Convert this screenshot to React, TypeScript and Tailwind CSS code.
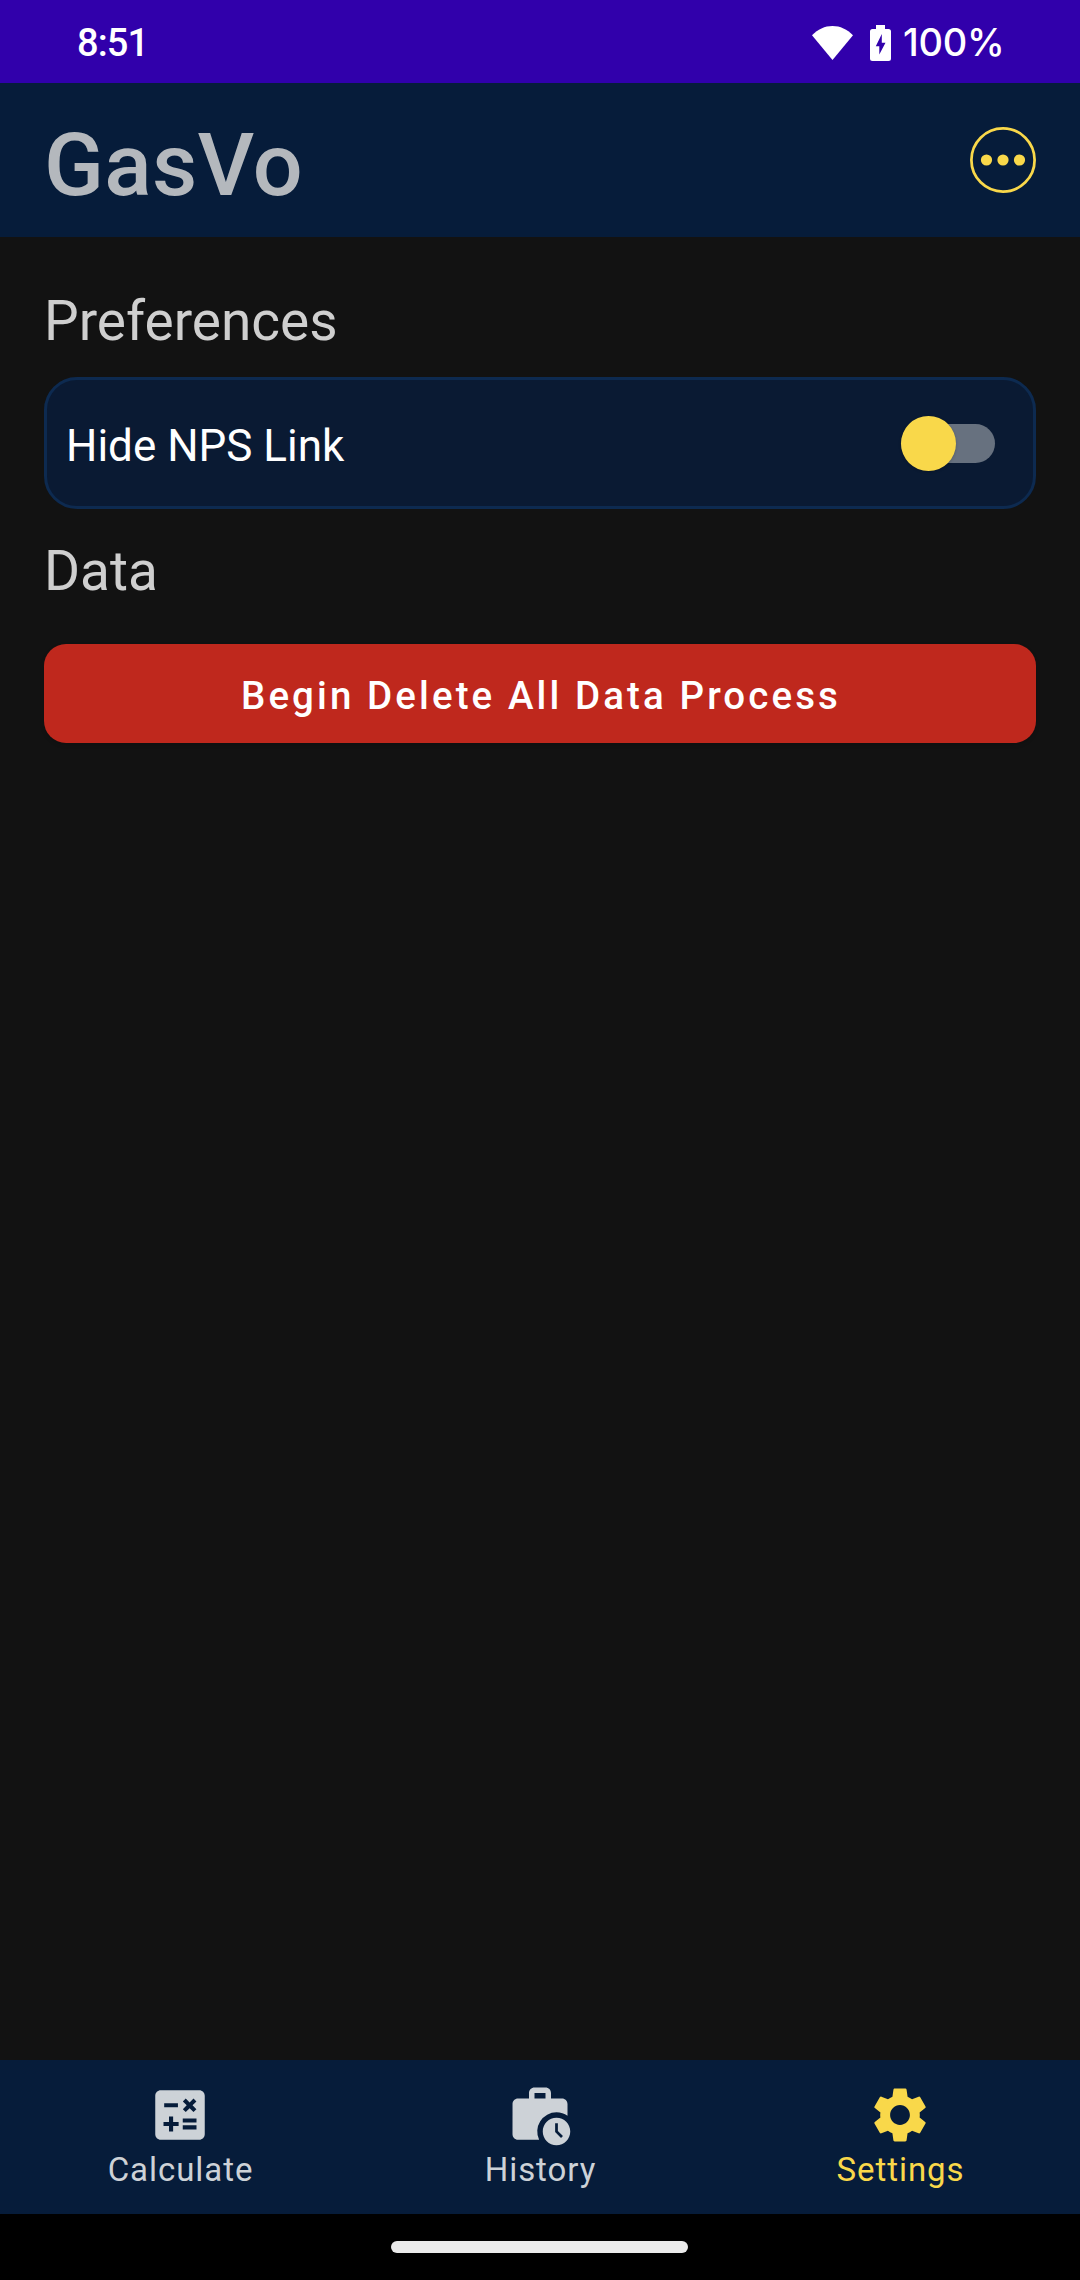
import type { ReactNode } from "react";
import { MdCalculate, MdSettings, MdWorkHistory } from "react-icons/md";

function StatusBar() {
  return (
    <div className="flex h-[83px] shrink-0 items-center justify-between bg-[#3100ab] pr-[77px] pl-[77px] text-[38px] leading-[42px] font-medium text-white">
      <span className="pt-[3px] tracking-[-0.9px]">8:51</span>
      <div className="flex items-center">
        <svg className="mt-[2px] h-[34px] w-[41px]" viewBox="0 0 41 34" fill="currentColor">
          <path d="M20.5 34 0 9.3C5.8 3.300 12.800 0 20.500 0S35.200 3.300 41 9.300Z" />
        </svg>
        <svg className="mt-[3px] ml-[17px] h-[36px] w-[21px]" viewBox="0 0 21 36" fill="currentColor" fillRule="evenodd">
          <path d="M6 0h9v4h3.500Q21 4 21 6.500v27Q21 36 18.500 36h-16Q0 36 0 33.500v-27Q0 4 2.500 4H6ZM11.800 9 5.800 21.200h3.500V29.500L15.500 17.800H11.800Z" />
        </svg>
        <span className="ml-[12px] w-[100px] pt-[1px] font-['Inter',sans-serif] tracking-[-0.3px]">100%</span>
      </div>
    </div>
  );
}

function Header() {
  return (
    <header className="flex h-[154px] shrink-0 items-center justify-between bg-[#061c3a] px-[44px]">
      <h1 className="pt-[10px] text-[88px] leading-[104px] font-medium tracking-[0.3px] text-[#b4b8bd]">GasVo</h1>
      <button aria-label="More" className="size-[66px] text-[#f9d84a]">
        <svg className="size-[66px]" viewBox="0 0 66 66" fill="currentColor">
          <circle cx="33" cy="33" r="31.600" fill="none" stroke="currentColor" strokeWidth="2.750" />
          <circle cx="16.500" cy="33" r="5.600" />
          <circle cx="33" cy="33" r="5.600" />
          <circle cx="49.500" cy="33" r="5.600" />
        </svg>
      </button>
    </header>
  );
}

function Toggle() {
  return (
    <button role="switch" aria-checked="false" aria-label="Hide NPS Link" className="flex h-[55px] w-[94px] items-center">
      <span className="flex h-[39px] w-full items-center rounded-full bg-[#67717f]">
        <span className="size-[55px] shrink-0 rounded-full bg-[#f9d84a] shadow-[0_1px_3px_rgba(0,0,0,0.2)]" />
      </span>
    </button>
  );
}

function NavItem({ icon, label, active = false }: { icon: ReactNode; label: string; active?: boolean }) {
  return (
    <button className={`flex flex-1 flex-col items-center pt-[22px] ${active ? "text-[#f9d84a]" : "text-[#cdd2d7]"}`}>
      {icon}
      <span className="mt-[2px] pl-[1px] text-[33px] leading-[40px] tracking-[0.95px]">{label}</span>
    </button>
  );
}

export default function App() {
  return (
    <div className="flex h-[2280px] w-[1080px] flex-col bg-[#121212] font-['Roboto',sans-serif]">
      <StatusBar />
      <Header />
      <main className="flex flex-1 flex-col px-[44px] pt-[52px]">
        <h2 className="text-[55px] leading-[64px] text-[#cfcfcf]">Preferences</h2>
        <div className="mt-[24px] flex h-[132px] items-center justify-between rounded-[33px] border-3 border-[#0d2a50] bg-[#0a1a33] pr-[38px] pl-[19px]">
          <span className="pt-[5px] text-[44px] leading-[52px] text-white">Hide NPS Link</span>
          <Toggle />
        </div>
        <h2 className="mt-[30px] text-[55px] leading-[64px] text-[#cfcfcf]">Data</h2>
        <button className="mt-[41px] flex h-[99px] items-center justify-center rounded-[22px] bg-[#bf281d] pt-[4px] pl-[2px] text-[38.5px] leading-[46px] font-medium tracking-[3.09px] text-white shadow-[0_2px_4px_rgba(0,0,0,0.15)]">
          Begin Delete All Data Process
        </button>
      </main>
      <nav className="flex h-[154px] shrink-0 bg-[#061c3a]">
        <NavItem icon={<MdCalculate className="size-[66px]" />} label="Calculate" />
        <NavItem icon={<MdWorkHistory className="size-[66px]" />} label="History" />
        <NavItem icon={<MdSettings className="size-[66px]" />} label="Settings" active />
      </nav>
      <div className="flex h-[66px] shrink-0 items-center justify-center bg-black pr-[2px]">
        <div className="h-[12px] w-[297px] rounded-full bg-[#ebebeb]" />
      </div>
    </div>
  );
}
